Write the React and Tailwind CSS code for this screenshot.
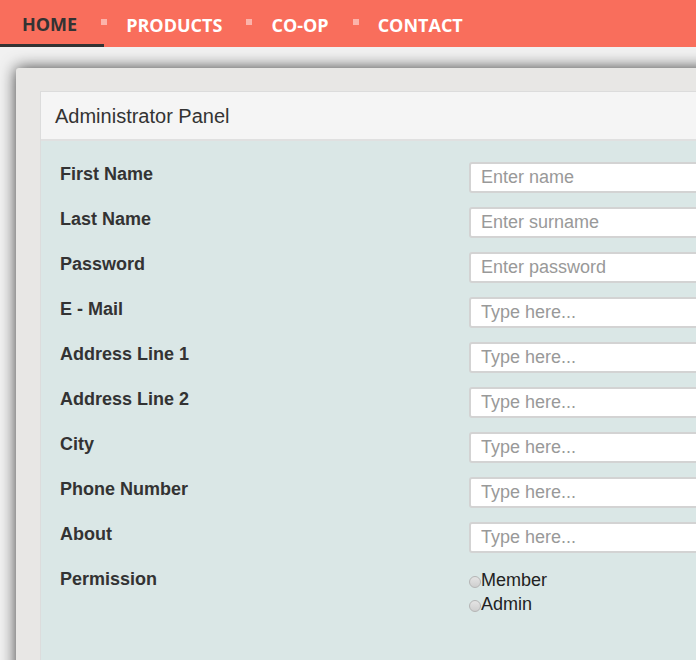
import { useState } from 'react'

const NAV = ['Home', 'Products', 'Co-op', 'Contact']

const FIELDS = [
  { label: 'First Name', placeholder: 'Enter name' },
  { label: 'Last Name', placeholder: 'Enter surname' },
  { label: 'Password', placeholder: 'Enter password', type: 'password' },
  { label: 'E - Mail', placeholder: 'Type here...' },
  { label: 'Address Line 1', placeholder: 'Type here...' },
  { label: 'Address Line 2', placeholder: 'Type here...' },
  { label: 'City', placeholder: 'Type here...' },
  { label: 'Phone Number', placeholder: 'Type here...' },
  { label: 'About', placeholder: 'Type here...' },
]

function Radio({ label, checked, onClick }) {
  return (
    <label onClick={onClick} className="flex items-center cursor-pointer leading-[24px]">
      <span className="w-[12px] h-[12px] rounded-full border border-[#b5b5b5] bg-gradient-to-b from-[#e4e4e4] to-[#cfcfcf] shrink-0 mt-[3px] flex items-center justify-center">
        {checked && <span className="w-[5px] h-[5px] rounded-full bg-[#333]" />}
      </span>
      <span>{label}</span>
    </label>
  )
}

export default function App() {
  const [perm, setPerm] = useState(null)

  return (
    <div className="h-[660px] bg-[#f1f1f1] overflow-hidden font-['Liberation_Sans',Arial,sans-serif]">
      {/* Top nav */}
      <nav className="h-[47px] bg-[#f96e5c] flex items-stretch">
        {NAV.map((item, i) => (
          <div
            key={item}
            className={`relative flex items-center pl-[22px] pr-[27px] font-['Open_Sans',sans-serif] font-bold text-[18px] uppercase pt-[4px] ${
              i === 0 ? 'text-[#333] border-b-[3px] border-[#333]' : 'text-white'
            }`}
          >
            {item}
            {i < NAV.length - 1 && (
              <span className="absolute right-[-3px] top-[19px] w-[6px] h-[6px] bg-[#fcb3aa]" />
            )}
          </div>
        ))}
      </nav>

      {/* Card */}
      <div className="ml-[16px] mt-[21px] w-[760px] bg-[#e8e7e5] rounded-[3px] shadow-[0_0_16px_rgba(0,0,0,0.75)] pl-[24px] pt-[23px] min-h-[620px]">
        <div className="border border-[#dcdcdc] bg-[#dae7e6] min-h-[580px]">
          <div className="h-[49px] bg-[#f5f5f5] border-b-2 border-[#e0e0e0] flex items-center px-[14px] pt-[1px] text-[20px] text-[#333]">
            Administrator Panel
          </div>

          <div className="pl-[19px] pt-[21px]">
            {FIELDS.map(f => (
              <div key={f.label} className="flex items-start h-[45px]">
                <div className="w-[409px] shrink-0 text-[18px] font-bold text-[#333] leading-[22px] pt-[1px]">{f.label}</div>
                <input
                  type={f.type || 'text'}
                  placeholder={f.placeholder}
                  className="w-[320px] h-[31px] border-2 border-[#d3d3d3] rounded-[3px] bg-white px-[10px] text-[18px] text-[#333] placeholder:text-[#999] outline-none"
                />
              </div>
            ))}

            <div className="flex items-start">
              <div className="w-[409px] shrink-0 text-[18px] font-bold text-[#333] leading-[22px] pt-[1px]">Permission</div>
              <div className="text-[18px] text-[#222] pt-[1px]">
                <Radio label="Member" checked={perm === 'member'} onClick={() => setPerm('member')} />
                <Radio label="Admin" checked={perm === 'admin'} onClick={() => setPerm('admin')} />
              </div>
            </div>
          </div>
        </div>
      </div>
    </div>
  )
}
